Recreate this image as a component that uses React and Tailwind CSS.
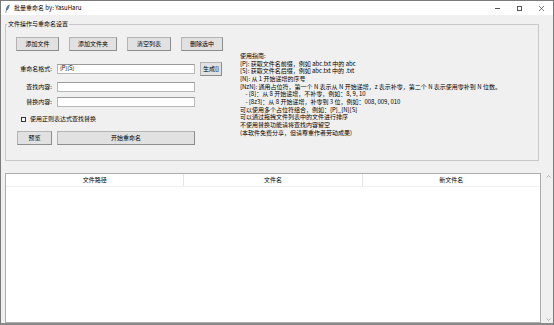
import React from "react";

const Btn = ({ className = "", children }) => (
  <div
    className={
      "flex items-center justify-center h-[14px] bg-[#e1e1e1] border border-[#b4b4b4] border-b-[#8c8c8c] border-r-[#8c8c8c] text-[6px] text-black " +
      className
    }
  >
    {children}
  </div>
);

const Input = ({ value }) => (
  <div className="w-[138px] h-[10px] bg-white border border-[#b8b8b8] border-t-[#9a9a9a] flex items-center pl-[2px] text-[5.5px] text-black">
    {value}
  </div>
);

const guide = [
  "使用指南:",
  "{P}: 获取文件名前缀，例如 abc.txt 中的 abc",
  "{S}: 获取文件名后缀，例如 abc.txt 中的 .txt",
  "{N}: 从 1 开始递增的序号",
  "{NzN}: 通用占位符，第一个 N 表示从 N 开始递增，z 表示补零，第二个 N 表示使用零补到 N 位数。",
  "    - {8}：从 8 开始递增，不补零，例如：8, 9, 10",
  "    - {8z3}：从 8 开始递增，补零到 3 位，例如：008, 009, 010",
  "可以使用多个占位符组合，例如：{P}_{N}{S}",
  "可以通过拖拽文件列表中的文件进行排序",
  "不使用替换功能请将查找内容留空",
  "(本软件免费分享，但请尊重作者劳动成果)",
];

export default function App() {
  return (
    <div className="w-[554px] h-[325px] flex flex-col border border-[#7a7a7a] border-b-2 border-b-[#8a8a8a] bg-[#f0f0f0] overflow-hidden font-['Noto_Sans_CJK_SC','Noto_Sans',sans-serif] text-[6px] leading-none text-black">
      {/* title bar */}
      <div className="h-[14px] shrink-0 bg-white flex items-center pl-[4px]">
        <svg width="5" height="9" viewBox="0 0 5 9" className="shrink-0">
          <path d="M4.6 0.3 C2.6 1.2 1.2 3.2 0.9 6.2 L0.5 8.8 L1.1 8.8 L1.5 6.6 C3.4 5.8 4.4 3.6 4.6 0.3 Z" fill="#3d5a80" />
          <path d="M4.3 0.8 L1.4 6.4" stroke="#9fb6d0" strokeWidth="0.5" />
        </svg>
        <span className="ml-[4px] text-[6px] text-black whitespace-nowrap">批量重命名 by: YasuHaru</span>
        <div className="ml-auto flex items-center gap-[17px] pr-[9px]">
          <div className="w-[5px] h-px bg-[#555]" />
          <div className="w-[5px] h-[5px] border border-[#555]" />
          <svg width="5" height="5" viewBox="0 0 5 5">
            <path d="M0 0 L5 5 M5 0 L0 5" stroke="#555" strokeWidth="0.8" />
          </svg>
        </div>
      </div>

      {/* body */}
      <div className="flex-1 flex flex-col pl-[4px] pt-[5px]">
        <fieldset className="w-[534px] border border-[#c8c8c8]">
          <legend className="ml-[1px] px-[1px] h-[8px] leading-[8px] text-[6px] text-black">
            文件操作与重命名设置
          </legend>
          <div className="flex items-start pl-[10px] pt-[9px] pb-[15px]">
            {/* left column */}
            <div className="flex flex-col w-[207px] shrink-0">
              <div className="flex gap-[10px]">
                <Btn className="w-[43px]">添加文件</Btn>
                <Btn className="w-[48px]">添加文件夹</Btn>
                <Btn className="w-[44px]">清空列表</Btn>
                <Btn className="w-[42px]">删除选中</Btn>
              </div>
              <div className="flex items-center h-[14px] mt-[11px]">
                <div className="w-[36px] text-right">重命名格式:</div>
                <div className="ml-[5px]"><Input value="{P}{S}" /></div>
                <Btn className="ml-[5px] w-[22px]">生成{"{}"}</Btn>
              </div>
              <div className="flex items-center h-[10px] mt-[6px]">
                <div className="w-[36px] text-right">查找内容:</div>
                <div className="ml-[5px]"><Input value="" /></div>
              </div>
              <div className="flex items-center h-[10px] mt-[5px]">
                <div className="w-[36px] text-right">替换内容:</div>
                <div className="ml-[5px]"><Input value="" /></div>
              </div>
              <div className="flex items-center h-[8px] mt-[8px] pl-[5px]">
                <div className="w-[5px] h-[5px] bg-white border border-[#333]" />
                <span className="ml-[4px]">使用正则表达式查找替换</span>
              </div>
              <div className="flex items-center mt-[8px] pl-[1px]">
                <Btn className="w-[35px]">预览</Btn>
                <Btn className="ml-[5px] w-[138px]">开始重命名</Btn>
              </div>
            </div>
            {/* right column */}
            <div className="ml-[17px] mt-[15px] flex flex-col leading-[7.65px] text-[6px] whitespace-pre">
              {guide.map((l, i) => (
                <div key={i}>{l}</div>
              ))}
            </div>
          </div>
        </fieldset>

        <div className="flex mt-[12px]">
          <div className="w-[536px] h-[150px] bg-white border border-[#adadad] flex flex-col">
            <div className="h-[13px] flex border-b border-[#f0f0f0]">
              <div className="flex-1 flex items-center justify-center border-r border-[#e5e5e5]">文件路径</div>
              <div className="flex-1 flex items-center justify-center border-r border-[#e5e5e5]">文件名</div>
              <div className="flex-1 flex items-center justify-center">新文件名</div>
            </div>
          </div>
          <div className="ml-[2px] w-[10px] h-[152px] -mt-[1px] flex flex-col items-center justify-between pt-[3px] pb-[3px]">
            <svg width="5" height="3" viewBox="0 0 5 3">
              <path d="M0.5 2.5 L2.5 0.5 L4.5 2.5" stroke="#a0a0a0" strokeWidth="0.8" fill="none" />
            </svg>
            <svg width="5" height="3" viewBox="0 0 5 3">
              <path d="M0.5 0.5 L2.5 2.5 L4.5 0.5" stroke="#a0a0a0" strokeWidth="0.8" fill="none" />
            </svg>
          </div>
        </div>
      </div>
    </div>
  );
}
